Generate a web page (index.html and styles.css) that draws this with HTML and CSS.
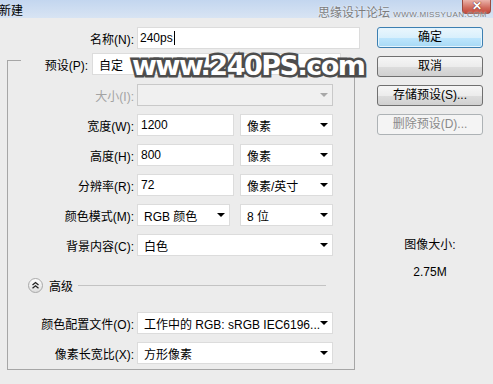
FILE: index.html
```html
<!DOCTYPE html>
<html lang="zh-CN">
<head>
  <meta charset="UTF-8">
  <title>新建</title>
  <link rel="stylesheet" href="styles.css">
</head>
<body>

<div class="dialog">
  <div class="titlebar">
    <span class="title">新建</span>
    <span class="close">✕</span>
  </div>
  <div class="site-mark">思缘设计论坛 <small>WWW.MISSYUAN.COM</small></div>

  <div class="main">
    <div class="form">
      <div class="row">
        <label>名称(N):</label>
        <div class="field name">240ps<span class="caret"></span></div>
      </div>

      <div class="group">
        <div class="row preset-row">
          <label>预设(P):</label>
          <div class="select preset">自定<span class="arrow"></span></div>
        </div>
        <div class="row size-row">
          <label class="off">大小(I):</label>
          <div class="select full disabled"><span></span><span class="arrow"></span></div>
        </div>
        <div class="row">
          <label>宽度(W):</label>
          <div class="field num">1200</div>
          <div class="select unit">像素<span class="arrow"></span></div>
        </div>
        <div class="row">
          <label>高度(H):</label>
          <div class="field num">800</div>
          <div class="select unit">像素<span class="arrow"></span></div>
        </div>
        <div class="row">
          <label>分辨率(R):</label>
          <div class="field num">72</div>
          <div class="select unit">像素/英寸<span class="arrow"></span></div>
        </div>
        <div class="row">
          <label>颜色模式(M):</label>
          <div class="select mode">RGB 颜色<span class="arrow"></span></div>
          <div class="select bits">8 位<span class="arrow"></span></div>
        </div>
        <div class="row">
          <label>背景内容(C):</label>
          <div class="select full">白色<span class="arrow"></span></div>
        </div>

        <div class="advanced">
          <svg class="toggle" width="15" height="15" viewBox="0 0 15 15">
            <defs>
              <linearGradient id="tg" x1="0" y1="0" x2="0" y2="1">
                <stop offset="0" stop-color="#ffffff"/>
                <stop offset="1" stop-color="#dcdcdc"/>
              </linearGradient>
            </defs>
            <circle cx="7.5" cy="7.5" r="7" fill="url(#tg)" stroke="#a8a8a8"/>
            <polyline points="4.5,7 7.5,4.5 10.5,7" fill="none" stroke="#222" stroke-width="1.3"/>
            <polyline points="4.5,10.3 7.5,7.8 10.5,10.3" fill="none" stroke="#222" stroke-width="1.3"/>
          </svg>
          <span>高级</span>
          <span class="rule"></span>
        </div>

        <div class="row profile-row">
          <label>颜色配置文件(O):</label>
          <div class="select full">工作中的 RGB: sRGB IEC6196...<span class="arrow"></span></div>
        </div>
        <div class="row">
          <label>像素长宽比(X):</label>
          <div class="select full">方形像素<span class="arrow"></span></div>
        </div>
      </div>
    </div>

    <div class="side">
      <div class="btn default">确定</div>
      <div class="btn">取消</div>
      <div class="btn">存储预设(S)...</div>
      <div class="btn disabled">删除预设(D)...</div>
      <div class="info">图像大小:</div>
      <div class="info value">2.75M</div>
    </div>
  </div>

  <div class="watermark">www.240PS.com</div>
</div>

</body>
</html>
```

FILE: styles.css
```css
* { box-sizing: border-box; }
body { margin: 0; background: #ececec; font: 12px "Liberation Sans", "Noto Sans CJK SC", sans-serif; color: #000; }
.dialog { position: relative; width: 493px; height: 384px; overflow: hidden; background: #ececec; }

.titlebar {
  height: 18px;
  display: flex;
  align-items: center;
  background: linear-gradient(#c3d6ef, #d8e4f3);
}
.title { margin-left: -1px; }
.close {
  position: absolute;
  top: 0;
  right: 2px;
  width: 29px;
  height: 14px;
  border: 1px solid #9b4a40;
  border-top: none;
  border-radius: 0 0 4px 4px;
  background: linear-gradient(#eab3aa, #d06a5c 60%, #c2493b);
  color: #fff;
  font-size: 12px;
  font-weight: bold;
  text-align: center;
  line-height: 13px;
  text-shadow: 0 0 1px #6b2019, 0 0 1px #6b2019;
}
.site-mark {
  position: absolute;
  left: 318px;
  top: 6px;
  line-height: 14px;
  color: #7c7c7c;
  text-shadow: 0 0 2px #fff;
}
.site-mark small { font-size: 8px; letter-spacing: 0.4px; }

.main { display: flex; padding-top: 9px; }
.form { width: 362px; }

.row { display: flex; align-items: center; height: 22px; }
.row label { width: 134px; margin-right: 3px; text-align: right; white-space: nowrap; }
.row label.off { color: #a3a3a3; }

.field, .select {
  height: 22px;
  background: #fff;
  border: 1px solid #dcdcdc;
  display: flex;
  align-items: center;
  white-space: nowrap;
}
.field { padding-left: 2px; }
.select { padding: 0 4px 0 6px; justify-content: space-between; }
.arrow {
  flex: none;
  width: 0;
  height: 0;
  border-left: 4px solid transparent;
  border-right: 4px solid transparent;
  border-top: 4px solid #000;
}
.select.disabled { background: #f0f0f0; border-color: #c9c9c9; }
.select.disabled .arrow { border-top-color: #a8a8a8; }
.caret { display: inline-block; width: 1px; height: 14px; margin-left: 1px; background: #000; }

.name { width: 223px; }
.num { width: 97px; padding-left: 3px; }
.unit { width: 93px; margin-left: 6px; }
.mode { width: 93px; }
.bits { width: 93px; margin-left: 10px; }
.full { width: 196px; }

.group {
  margin: 11px 0 0 7px;
  width: 348px;
  height: 310px;
  border: 1px solid #a6a6a6;
}
.group .row { margin-top: 8px; }
.group .row label { width: 126px; }
.group .preset-row { margin: -8px 8px 0 13px; background: #ececec; }
.group .preset-row label { width: 67px; margin-right: 4px; }
.preset { width: 249px; }
.group .size-row { margin-top: 9px; }

.advanced {
  display: flex;
  align-items: center;
  height: 16px;
  margin: 21px 28px 0 20px;
}
.toggle { flex: none; margin-right: 6px; }
.rule { flex: 1; height: 1px; margin-left: 5px; background: #c3c3c3; }
.group .profile-row { margin-top: 19px; }

.side { width: 106px; margin-left: 15px; }
.btn {
  height: 21px;
  margin-bottom: 8px;
  border: 1px solid #707070;
  border-radius: 3px;
  background: linear-gradient(#f6f6f6, #ececec 50%, #dddddd 51%, #d0d0d0);
  text-align: center;
  line-height: 19px;
}
.btn.default {
  border-color: #3c7fb1;
  background: linear-gradient(#eaf6fd, #d9f0fc 50%, #bee6fd 51%, #a7d9f5);
  box-shadow: inset 0 0 0 1px #e4f4fd;
}
.btn.disabled { border-color: #adb2b5; background: #f4f4f4; color: #8a8a8a; }
.info { margin-top: 102px; text-align: center; line-height: 16px; }
.info.value { margin-top: 11px; }

.watermark {
  position: absolute;
  left: 132px;
  top: 50px;
  font: bold 27px "DejaVu Sans", sans-serif;
  letter-spacing: -1.5px;
  color: #fff;
  -webkit-text-stroke: 5px #4d4d4d;
  paint-order: stroke fill;
}
```
